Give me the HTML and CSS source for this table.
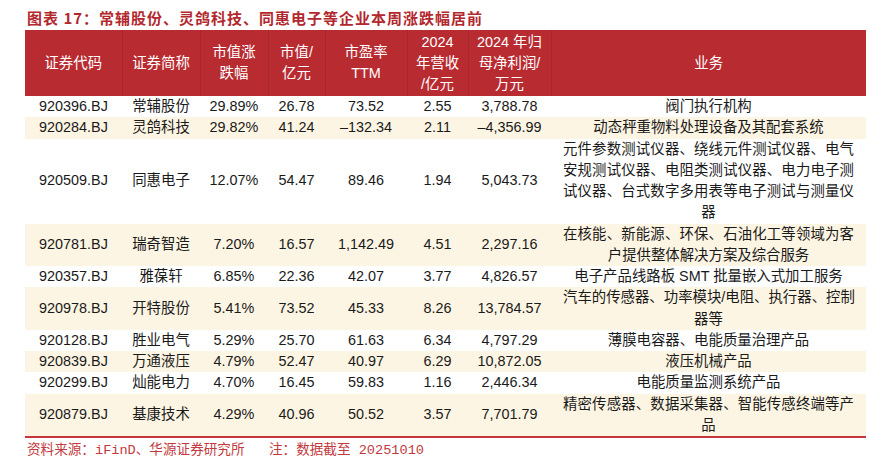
FILE: index.html
```html
<!DOCTYPE html>
<html lang="zh-CN">
<head>
<meta charset="utf-8">
<title>图表 17</title>
<link rel="stylesheet" href="styles.css">
</head>
<body>
<div class="fig">
  <div class="title">图表 17：常辅股份、灵鸽科技、同惠电子等企业本周涨跌幅居前</div>
  <table class="tbl">
    <colgroup>
      <col class="c1"><col class="c2"><col class="c3"><col class="c4"><col class="c5"><col class="c6"><col class="c7"><col class="c8">
    </colgroup>
    <thead>
      <tr>
        <th>证券代码</th>
        <th>证券简称</th>
        <th>市值涨<br>跌幅</th>
        <th>市值/<br>亿元</th>
        <th>市盈率<br>TTM</th>
        <th>2024<br>年营收<br>/亿元</th>
        <th>2024 年归<br>母净利润/<br>万元</th>
        <th>业务</th>
      </tr>
    </thead>
    <tbody>
      <tr>
        <td>920396.BJ</td><td>常辅股份</td><td>29.89%</td><td>26.78</td><td>73.52</td><td>2.55</td><td>3,788.78</td>
        <td class="biz">阀门执行机构</td>
      </tr>
      <tr class="alt">
        <td>920284.BJ</td><td>灵鸽科技</td><td>29.82%</td><td>41.24</td><td>–132.34</td><td>2.11</td><td>–4,356.99</td>
        <td class="biz">动态秤重物料处理设备及其配套系统</td>
      </tr>
      <tr>
        <td>920509.BJ</td><td>同惠电子</td><td>12.07%</td><td>54.47</td><td>89.46</td><td>1.94</td><td>5,043.73</td>
        <td class="biz"><span class="j">元件参数测试仪器、绕线元件测试仪器、电气</span><span class="j">安规测试仪器、电阻类测试仪器、电力电子测</span><span class="j">试仪器、台式数字多用表等电子测试与测量仪</span><span class="l">器</span></td>
      </tr>
      <tr class="alt">
        <td>920781.BJ</td><td>瑞奇智造</td><td>7.20%</td><td>16.57</td><td>1,142.49</td><td>4.51</td><td>2,297.16</td>
        <td class="biz"><span class="j">在核能、新能源、环保、石油化工等领域为客</span><span class="l">户提供整体解决方案及综合服务</span></td>
      </tr>
      <tr>
        <td>920357.BJ</td><td>雅葆轩</td><td>6.85%</td><td>22.36</td><td>42.07</td><td>3.77</td><td>4,826.57</td>
        <td class="biz">电子产品线路板 SMT 批量嵌入式加工服务</td>
      </tr>
      <tr class="alt">
        <td>920978.BJ</td><td>开特股份</td><td>5.41%</td><td>73.52</td><td>45.33</td><td>8.26</td><td>13,784.57</td>
        <td class="biz"><span class="j">汽车的传感器、功率模块/电阻、执行器、控制</span><span class="l">器等</span></td>
      </tr>
      <tr>
        <td>920128.BJ</td><td>胜业电气</td><td>5.29%</td><td>25.70</td><td>61.63</td><td>6.34</td><td>4,797.29</td>
        <td class="biz">薄膜电容器、电能质量治理产品</td>
      </tr>
      <tr class="alt">
        <td>920839.BJ</td><td>万通液压</td><td>4.79%</td><td>52.47</td><td>40.97</td><td>6.29</td><td>10,872.05</td>
        <td class="biz">液压机械产品</td>
      </tr>
      <tr>
        <td>920299.BJ</td><td>灿能电力</td><td>4.70%</td><td>16.45</td><td>59.83</td><td>1.16</td><td>2,446.34</td>
        <td class="biz">电能质量监测系统产品</td>
      </tr>
      <tr class="alt last">
        <td>920879.BJ</td><td>基康技术</td><td>4.29%</td><td>40.96</td><td>50.52</td><td>3.57</td><td>7,701.79</td>
        <td class="biz"><span class="j">精密传感器、数据采集器、智能传感终端等产</span><span class="l">品</span></td>
      </tr>
    </tbody>
  </table>
  <div class="source">资料来源：iFinD、华源证券研究所&nbsp;&nbsp;&nbsp;注：数据截至 20251010</div>
</div>
</body>
</html>
```

FILE: styles.css
```css
html, body {
  margin: 0;
  padding: 0;
  background: #ffffff;
}

.fig {
  width: 841px;
  padding-left: 25px;
}

.title {
  padding: 5px 0 0 2px;
  height: 25px;
  line-height: 25px;
  font-family: "Noto Sans CJK SC", sans-serif;
  font-weight: 700;
  font-size: 15px;
  letter-spacing: 1px;
  color: #b2282e;
  white-space: nowrap;
}

.tbl {
  width: 841px;
  border-collapse: collapse;
  table-layout: fixed;
  font-family: "Liberation Sans", "Noto Sans CJK SC", sans-serif;
  font-size: 14.4px;
  color: #1a1a1a;
}

.c1 { width: 97px; }
.c2 { width: 78px; }
.c3 { width: 68px; }
.c4 { width: 57px; }
.c5 { width: 82px; }
.c6 { width: 61px; }
.c7 { width: 83px; }
.c8 { width: 315px; }

.tbl th {
  height: 66px;
  padding: 0;
  background: #b82b31;
  color: #ffffff;
  font-weight: normal;
  line-height: 21px;
  text-align: center;
  vertical-align: middle;
  border-left: 1px solid #a9262c;
}

.tbl th:first-child {
  border-left: none;
}

.tbl td {
  padding: 0;
  line-height: 21.25px;
  text-align: center;
  vertical-align: middle;
  white-space: nowrap;
}

.tbl tr.alt td {
  background: #fdf5e3;
}

.tbl tr.last td {
  border-bottom: 2px solid #c4363c;
}

.tbl td.biz {
  padding: 0 12px;
  white-space: normal;
}

.biz .j {
  display: block;
  text-align: justify;
  text-align-last: justify;
  white-space: nowrap;
}

.biz .l {
  display: block;
  text-align: center;
}

.source {
  margin-top: 3px;
  padding-left: 2px;
  line-height: 20px;
  font-family: "Liberation Mono", "Noto Sans CJK SC", monospace;
  font-size: 13.6px;
  color: #c23a40;
  white-space: nowrap;
}
```
